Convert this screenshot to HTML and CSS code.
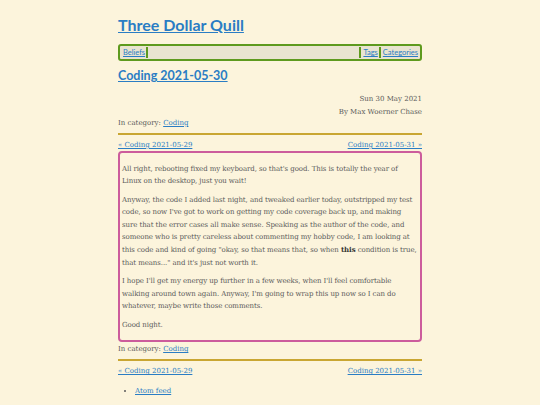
FILE: index.html
```
<!DOCTYPE html>
<html>
<head>
<meta charset="utf-8">
<link rel="stylesheet" href="styles.css">
</head>
<body>
<div class="page">
  <h1 class="site-title"><a href="#">Three Dollar Quill</a></h1>
  <nav class="topnav">
    <a class="nav-item nav-left" href="#">Beliefs</a>
    <span class="nav-spacer"></span>
    <a class="nav-item nav-right" href="#">Tags</a>
    <a class="nav-item nav-right" href="#">Categories</a>
  </nav>
  <h2 class="post-title"><a href="#">Coding 2021-05-30</a></h2>
  <div class="meta">
    <div class="meta-line">Sun 30 May 2021</div>
    <div class="meta-line">By Max Woerner Chase</div>
  </div>
  <div class="category">In category: <a href="#">Coding</a></div>
  <hr class="rule">
  <div class="pager">
    <a href="#">« Coding 2021-05-29</a>
    <a href="#">Coding 2021-05-31 »</a>
  </div>
  <article class="post-body">
    <p>All right, rebooting fixed my keyboard, so that's good. This is totally the year of Linux on the desktop, just you wait!</p>
    <p>Anyway, the code I added last night, and tweaked earlier today, outstripped my test code, so now I've got to work on getting my code coverage back up, and making sure that the error cases all make sense. Speaking as the author of the code, and someone who is pretty careless about commenting my hobby code, I am looking at this code and kind of going "okay, so that means that, so when <strong>this</strong> condition is true, that means..." and it's just not worth it.</p>
    <p>I hope I'll get my energy up further in a few weeks, when I'll feel comfortable walking around town again. Anyway, I'm going to wrap this up now so I can do whatever, maybe write those comments.</p>
    <p>Good night.</p>
  </article>
  <div class="category category-bottom">In category: <a href="#">Coding</a></div>
  <hr class="rule">
  <div class="pager">
    <a href="#">« Coding 2021-05-29</a>
    <a href="#">Coding 2021-05-31 »</a>
  </div>
  <ul class="feeds">
    <li><a href="#">Atom feed</a></li>
  </ul>
</div>
</body>
</html>
```
FILE: styles.css
```
html, body {
  margin: 0;
  padding: 0;
  background: #fcf4dc;
}
body {
  font-family: "DejaVu Serif", serif;
  font-size: 7px;
  color: #5a5a5a;
}
a {
  color: #2a7dc4;
}
.page {
  width: 304px;
  margin: 0 auto;
  padding-top: 14px;
}
.site-title {
  font-family: Lato, "Open Sans", sans-serif;
  font-weight: 700;
  font-size: 16px;
  line-height: 22px;
  margin: 0 0 8px 0;
}
.topnav {
  display: flex;
  align-items: stretch;
  height: 13px;
  border: 2px solid #5e9a1e;
  border-radius: 3px;
  background: #e9e4d0;
  font-family: Lato, "Open Sans", sans-serif;
  font-size: 7.5px;
  line-height: 13px;
  padding: 0 1px;
}
.nav-item {
  padding: 0 1px 0 2px;
  margin: 1px 0;
  line-height: 11px;
}
.nav-left {
  border-right: 2px solid #5e9a1e;
}
.nav-right {
  border-left: 2px solid #5e9a1e;
}
.nav-spacer {
  flex: 1;
}
.post-title {
  font-family: Lato, "Open Sans", sans-serif;
  font-weight: 700;
  font-size: 12.5px;
  line-height: 16px;
  margin: 7px 0 9px 0;
}
.meta {
  text-align: right;
  line-height: 12.5px;
}
.category {
  line-height: 11px;
}
.rule {
  border: 0;
  height: 2px;
  background: #c9a632;
  margin: 4px 0 4px 0;
}
.pager {
  display: flex;
  justify-content: space-between;
  line-height: 12px;
}
.post-body {
  border: 2px solid #cc5c9c;
  border-radius: 4px;
  padding: 4px 2px 2px 2px;
  line-height: 12.6px;
  letter-spacing: -0.08px;
}
.post-body p {
  margin: 5.5px 0 6px 0;
}
.post-body strong {
  color: #333;
}
.category-bottom {
  margin-top: 2.5px;
}
.feeds {
  margin: 8px 0 0 0;
  padding-left: 17px;
  line-height: 12px;
}
```
